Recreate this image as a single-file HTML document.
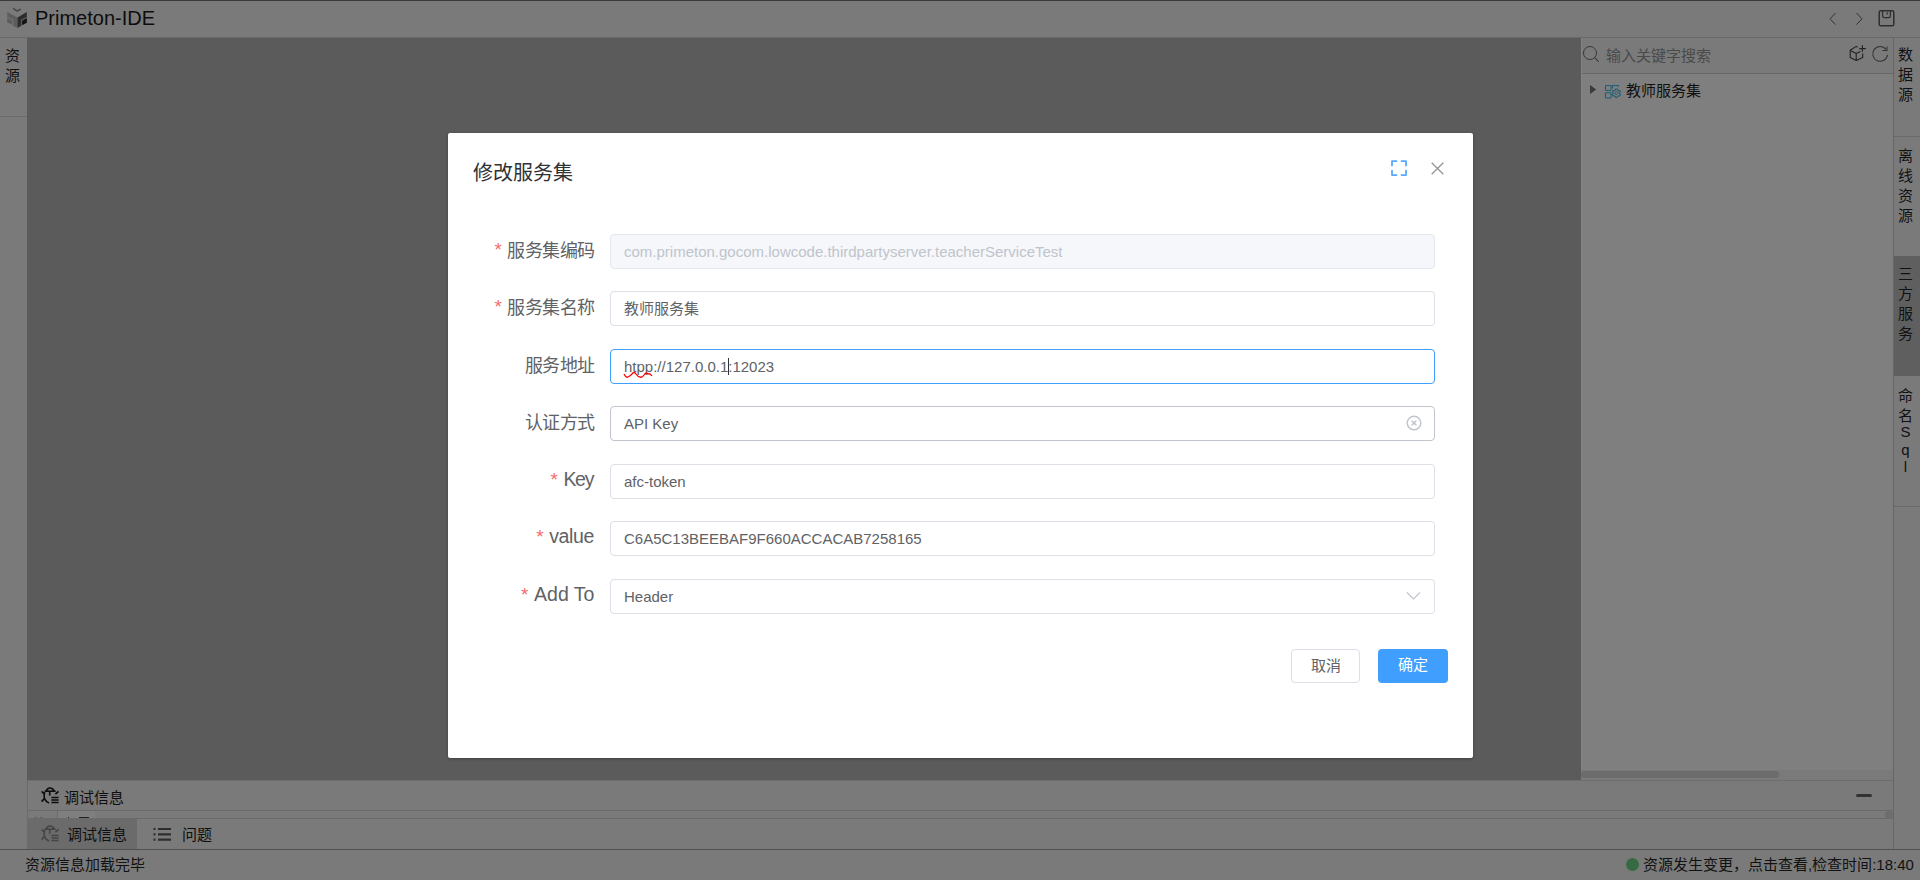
<!DOCTYPE html>
<html lang="zh-CN"><head><meta charset="utf-8">
<style>
*{box-sizing:border-box}
html,body{margin:0;padding:0;width:1920px;height:880px;overflow:hidden;background:#7a7a7a;font-family:"Liberation Sans",sans-serif}
.a{position:absolute}
#topline{left:0;top:0;width:1920px;height:1px;background:#3b3b3b}
#titlebar{left:0;top:1px;width:1920px;height:37px;background:#7a7a7a;border-bottom:1px solid #686868}
#title{left:35px;top:6px;font-size:20px;color:#0d0d0d;line-height:24px}
#leftbar{left:0;top:38px;width:27px;height:811px;background:#7a7a7a}
#main{left:27px;top:38px;width:1554px;height:742px;background:#5b5b5b}
#rpanel{left:1581px;top:38px;width:312px;height:742px;background:#7f7f7f;border-left:1px solid #828282}
#rtabs{left:1893px;top:38px;width:27px;height:811px;background:#7a7a7a;border-left:1px solid #666}
#debug{left:27px;top:780px;width:1866px;height:69px;background:#7a7a7a}
#status{left:0;top:849px;width:1920px;height:31px;background:#7a7a7a;border-top:1px solid #505050}
.vt{font-size:15px;line-height:20px;color:#111;width:15px;text-align:center}
.dark{color:#0f0f0f}

#modal{left:448px;top:133px;width:1025px;height:625px;background:#fff;border-radius:2px;box-shadow:0 1px 3px rgba(0,0,0,.3)}
#mtitle{left:25px;top:27px;font-size:20px;line-height:26px;color:#303133}
.lbl{position:absolute;right:878.6px;font-size:18px;line-height:34px;color:#606266;white-space:nowrap;letter-spacing:-0.6px}
.lbl b{color:#f56c6c;font-weight:normal;margin-right:5.6px;letter-spacing:0;font-size:19px;position:relative;top:-1px}
.lat{font-size:19.5px;position:relative;top:-2.5px;letter-spacing:0}
.lat2 b{top:-2.5px}
.inp{position:absolute;left:162px;width:825px;height:35px;border:1px solid #dcdfe6;border-radius:4px;background:#fff;font-size:15px;color:#606266;padding-left:13px;line-height:33px;white-space:nowrap}
.btn{position:absolute;height:34px;border-radius:4px;font-size:15px;line-height:32px;text-align:center}
</style></head><body>
<div id="topline" class="a"></div>
<div id="titlebar" class="a"></div>
<div id="title" class="a">Primeton-IDE</div>

<div id="leftbar" class="a"></div>
<div class="a" style="left:0;top:116px;width:27px;height:1px;background:#6a6a6a"></div>
<div class="a vt" style="left:5px;top:46px">资<br>源</div>

<div id="main" class="a"></div>
<div id="rpanel" class="a"></div>
<div id="rtabs" class="a"></div>

<div id="debug" class="a"></div>
<div id="status" class="a"></div>


<!-- title bar icons -->
<svg class="a" style="left:4px;top:5px" width="26" height="26" viewBox="4 5 26 26">
  <path d="M13.2 8.4 L17.2 11.2 L20.8 9" fill="none" stroke="#474747" stroke-width="1.5"/>
  <path d="M7.2 12.1 L17.6 17.4 L17.6 28 L12.9 25.7 L12.9 24.5 L7.2 22.7 Z" fill="#5d5d5d"/>
  <path d="M7.2 17.3 L12.9 20.1 L12.9 24.6" fill="none" stroke="#747474" stroke-width="1.1"/>
  <path d="M17.6 17.4 L26.8 12.1 L26.8 22.7 L21.3 25.6 L17.6 28 Z" fill="#2c2c2c"/>
  <path d="M21.4 25.5 L21.4 20.2 L26.8 17.4" fill="none" stroke="#5e5e5e" stroke-width="1.1"/>
  <path d="M22.2 20.9 L26.8 18.4 L26.8 22.6 L22.2 25 Z" fill="#141414"/>
</svg>
<svg class="a" style="left:1828px;top:12px" width="10" height="14" viewBox="0 0 10 14"><path d="M7.5 1 L2 6.8 L7.5 12.6" fill="none" stroke="#333" stroke-width="1"/></svg>
<svg class="a" style="left:1854px;top:12px" width="10" height="14" viewBox="0 0 10 14"><path d="M2.5 1 L8 6.8 L2.5 12.6" fill="none" stroke="#333" stroke-width="1"/></svg>
<svg class="a" style="left:1877px;top:9px" width="18" height="18" viewBox="0 0 18 18"><rect x="2.2" y="1.8" width="14.6" height="15" rx="1.6" fill="none" stroke="#2e2e2e" stroke-width="1.5"/><path d="M5.6 1.8 V7 Q5.6 8.6 7.2 8.6 H11.8 Q13.4 8.6 13.4 7 V1.8" fill="none" stroke="#2e2e2e" stroke-width="1.2"/><path d="M10.2 3.2 V5.4" stroke="#2e2e2e" stroke-width="1.2"/></svg>

<!-- right panel -->
<div class="a" style="left:1582px;top:38px;width:311px;height:35px;background:#7a7a7a"></div>
<div class="a" style="left:1582px;top:73px;width:311px;height:1px;background:#676767"></div>
<svg class="a" style="left:1582px;top:45px" width="19" height="19" viewBox="0 0 19 19"><circle cx="8" cy="8" r="6.5" fill="none" stroke="#383838" stroke-width="1"/><path d="M12.7 12.7 L16.6 16.6" stroke="#383838" stroke-width="1.1"/></svg>
<div class="a" style="left:1606px;top:46px;font-size:15px;line-height:20px;color:#4a4a4a">输入关键字搜索</div>
<svg class="a" style="left:1845px;top:40px" width="26" height="26" viewBox="1845 40 26 26"><g fill="none" stroke="#222" stroke-width="1.1" stroke-linejoin="round"><path d="M1857.6 47.4 L1856.2 46.4 L1850.2 50.3 V57.4 L1856.2 60.4 L1862.7 57.4 V53.6"/><path d="M1850.2 50.5 L1856.2 53.6 L1860.4 51.5 M1856.2 53.6 V60.4"/><path d="M1862.4 45.2 V51.7 M1859.2 48.6 H1865.8"/></g></svg>
<svg class="a" style="left:1870px;top:40px" width="23" height="26" viewBox="1870 40 23 26"><g fill="none" stroke="#333" stroke-width="1.05"><path d="M1886.03 49.34 A7.4 7.4 0 1 0 1887.53 54.93"/><path d="M1882.4 50.5 H1887 V46.4"/></g></svg>
<svg class="a" style="left:1589px;top:84px" width="8" height="11" viewBox="0 0 8 11"><path d="M1 1 L7.2 5.5 L1 10 Z" fill="#3a3a3a"/></svg>
<svg class="a" style="left:1604px;top:83px" width="18" height="17" viewBox="0 0 18 17"><rect x="1.5" y="2.5" width="5.5" height="5" rx="0.6" fill="none" stroke="#1f6075" stroke-width="1.1"/><rect x="1.5" y="9.7" width="5.5" height="5.3" rx="0.6" fill="none" stroke="#1f6075" stroke-width="1.1"/><path d="M8.5 5.5 V2.5 H14.2 V4" fill="none" stroke="#1f6075" stroke-width="1.1"/><path d="M10.70 7.26 L11.42 6.95 L11.68 5.96 L13.12 5.96 L13.38 6.95 L14.10 7.26 L14.73 7.72 L15.71 7.46 L16.43 8.70 L15.71 9.42 L15.80 10.20 L15.71 10.98 L16.43 11.70 L15.71 12.94 L14.73 12.68 L14.10 13.14 L13.38 13.45 L13.12 14.44 L11.68 14.44 L11.42 13.45 L10.70 13.14 L10.07 12.68 L9.09 12.94 L8.37 11.70 L9.09 10.98 L9.00 10.20 L9.09 9.42 L8.37 8.70 L9.09 7.46 L10.07 7.72 Z" fill="#7f7f7f" stroke="#1f6075" stroke-width="1.1" stroke-linejoin="round"/><circle cx="12.4" cy="10.2" r="1.4" fill="none" stroke="#1f6075" stroke-width="0.9"/></svg>
<div class="a dark" style="left:1626px;top:81px;font-size:15px;line-height:20px">教师服务集</div>
<!-- right panel scrollbar -->
<div class="a" style="left:1581px;top:770px;width:312px;height:10px;background:#7a7a7a"></div>
<div class="a" style="left:1581px;top:771px;width:198px;height:7px;border-radius:4px;background:#6c6c6c"></div>

<!-- right vertical tabs -->
<div class="a vt" style="left:1898px;top:45px">数<br>据<br>源</div>
<div class="a" style="left:1894px;top:136px;width:26px;height:1px;background:#6a6a6a"></div>
<div class="a vt" style="left:1898px;top:146px">离<br>线<br>资<br>源</div>
<div class="a" style="left:1894px;top:256px;width:26px;height:120px;background:#5f5f5f"></div>
<div class="a vt" style="left:1898px;top:264px">三<br>方<br>服<br>务</div>
<div class="a vt" style="left:1898px;top:386px">命</div><div class="a vt" style="left:1898px;top:406px">名</div><div class="a vt" style="left:1898px;top:422px">S</div><div class="a vt" style="left:1898px;top:440px">q</div><div class="a vt" style="left:1898px;top:457px">l</div>
<div class="a" style="left:1894px;top:506px;width:26px;height:1px;background:#6a6a6a"></div>

<!-- debug panel -->
<div class="a" style="left:27px;top:780px;width:1866px;height:1px;background:#6e6e6e"></div>
<svg class="a" style="left:38px;top:784px" width="24" height="24" viewBox="38 784 24 24"><g fill="none" stroke="#0d0d0d" stroke-width="1.6"><path d="M46.2 791.2 Q47 788 50 788 Q53 788 54.1 791.2"/><path d="M44.6 791.2 H55.6"/><path d="M41.6 791.4 L44.2 793.8"/><path d="M44.6 792 Q43.6 796.5 44.6 798.8 Q46 801.8 49 802.9"/><path d="M41.6 801.6 L44.3 798.6"/><path d="M55.4 794.2 L58.5 791.3"/><path d="M49.7 792 V795.6"/></g><path d="M51.4 797.4 H58.6 M51.4 800 H58.6 M51.4 802.6 H58.6" stroke="#0d0d0d" stroke-width="1.5"/></svg>
<div class="a dark" style="left:64px;top:788px;font-size:15px;line-height:20px">调试信息</div>
<div class="a" style="left:1855.5px;top:794px;width:16.5px;height:3px;border-radius:1.5px;background:#333"></div>
<div class="a" style="left:27px;top:810px;width:1866px;height:1px;background:#6a6a6a"></div>
<div class="a" style="left:57px;top:811px;width:1px;height:7px;background:#6d6d6d"></div>
<div class="a" style="left:58px;top:811px;width:37px;height:7px;background:#7f7f7f"></div>
<div class="a" style="left:27px;top:780px;width:1px;height:38px;background:#6a6a6a"></div>
<div class="a" style="left:68px;top:817px;width:1px;height:1px;background:#2a2a2a"></div>
<div class="a" style="left:79px;top:817px;width:10px;height:1px;background:#222"></div>
<div class="a" style="left:34px;top:817px;width:3px;height:1px;background:#666"></div><div class="a" style="left:40px;top:817px;width:3px;height:1px;background:#666"></div>
<div class="a" style="left:27px;top:818px;width:1866px;height:1px;background:#6a6a6a"></div>
<div class="a" style="left:1885px;top:811px;width:8px;height:7.5px;border-radius:50%;background:#6d6d6d"></div>
<div class="a" style="left:27px;top:818px;width:110px;height:31px;background:#6b6b6b"></div>
<svg class="a" style="left:38px;top:822px" width="24" height="24" viewBox="38 784 24 24"><g fill="none" stroke="#454545" stroke-width="1.6"><path d="M46.2 791.2 Q47 788 50 788 Q53 788 54.1 791.2"/><path d="M44.6 791.2 H55.6"/><path d="M41.6 791.4 L44.2 793.8"/><path d="M44.6 792 Q43.6 796.5 44.6 798.8 Q46 801.8 49 802.9"/><path d="M41.6 801.6 L44.3 798.6"/><path d="M55.4 794.2 L58.5 791.3"/><path d="M49.7 792 V795.6"/></g><path d="M51.4 797.4 H58.6 M51.4 800 H58.6 M51.4 802.6 H58.6" stroke="#454545" stroke-width="1.5"/></svg>
<div class="a dark" style="left:67px;top:825px;font-size:15px;line-height:20px">调试信息</div>
<svg class="a" style="left:153px;top:827px" width="19" height="15" viewBox="0 0 19 15"><path d="M0.5 2 H2.5 M0.5 7.3 H2.5 M0.5 12.6 H2.5" stroke="#2e2e2e" stroke-width="2.2"/><path d="M5 2 H18 M5 7.3 H18 M5 12.6 H18" stroke="#2e2e2e" stroke-width="2.2"/></svg>
<div class="a dark" style="left:182px;top:825px;font-size:15px;line-height:20px">问题</div>

<!-- status bar -->
<div class="a" style="left:25px;top:855px;font-size:15px;line-height:20px;color:#111">资源信息加载完毕</div>
<div class="a" style="left:1626px;top:858px;width:13px;height:13px;border-radius:50%;background:#356a42"></div>
<div class="a" style="left:1643px;top:855px;font-size:15px;line-height:20px;color:#111;white-space:nowrap">资源发生变更，点击查看,检查时间:18:40</div>

<div id="modal" class="a">
  <div id="mtitle" class="a">修改服务集</div>
  <div class="lbl" style="top:101px"><b>*</b>服务集编码</div>
  <div class="inp" style="top:101px;background:#f5f7fa;border-color:#e4e7ed;color:#c0c4cc">com.primeton.gocom.lowcode.thirdpartyserver.teacherServiceTest</div>
  <div class="lbl" style="top:158px"><b>*</b>服务集名称</div>
  <div class="inp" style="top:158px">教师服务集</div>
  <div class="lbl" style="top:216px">服务地址</div>
  <div class="inp" style="top:216px;border-color:#409eff">htpp://127.0.0.1:12023</div>
  <div class="lbl" style="top:273px">认证方式</div>
  <div class="inp" style="top:273px;border-color:#c0c4cc">API Key</div>
  <div class="lbl lat2" style="top:331px"><b>*</b><span class="lat" style="letter-spacing:-1.3px;margin-right:1.3px">Key</span></div>
  <div class="inp" style="top:331px">afc-token</div>
  <div class="lbl lat2" style="top:388px"><b>*</b><span class="lat" style="letter-spacing:-0.35px;margin-right:0.35px">value</span></div>
  <div class="inp" style="top:388px">C6A5C13BEEBAF9F660ACCACAB7258165</div>
  <div class="lbl lat2" style="top:446px"><b>*</b><span class="lat">Add To</span></div>
  <div class="inp" style="top:446px">Header</div>

  <svg class="a" style="left:942px;top:26px" width="18" height="18" viewBox="0 0 18 18"><path d="M2 6.5 V2 H6.5 M11.5 2 H16 V6.5 M16 11.5 V16 H11.5 M6.5 16 H2 V11.5" fill="none" stroke="#55a8ff" stroke-width="1.75" stroke-linecap="round" stroke-linejoin="round"/></svg>
  <svg class="a" style="left:983px;top:29px" width="13" height="13" viewBox="0 0 13 13"><path d="M0.7 0.7 L12.3 12.3 M12.3 0.7 L0.7 12.3" stroke="#909399" stroke-width="1.3"/></svg>
  <svg class="a" style="left:958px;top:282px" width="16" height="16" viewBox="0 0 16 16"><circle cx="8" cy="8" r="6.8" fill="none" stroke="#c0c4cc" stroke-width="1.4"/><path d="M5.7 5.7 L10.3 10.3 M10.3 5.7 L5.7 10.3" stroke="#c0c4cc" stroke-width="1.6"/></svg>
  <svg class="a" style="left:958px;top:458px" width="15" height="10" viewBox="0 0 15 10"><path d="M1 1.5 L7.5 8 L14 1.5" fill="none" stroke="#c0c4cc" stroke-width="1.2"/></svg>
  <div class="a" style="left:280px;top:225px;width:1px;height:17px;background:#303133"></div>
  <svg class="a" style="left:175px;top:239px" width="30" height="7" viewBox="0 0 30 7"><path d="M1 2 Q3 6 5 5 T9 2 Q11 -1 13 2 T17 5 Q19 6 21 3 T25 2 Q27 1 29 4" fill="none" stroke="#f00" stroke-width="1.3"/></svg>
  <div class="btn" style="left:843px;top:516px;width:69px;border:1px solid #dcdfe6;color:#606266">取消</div>
  <div class="btn" style="left:930px;top:516px;width:70px;background:#409eff;color:#fff">确定</div>
</div>
</body></html>
